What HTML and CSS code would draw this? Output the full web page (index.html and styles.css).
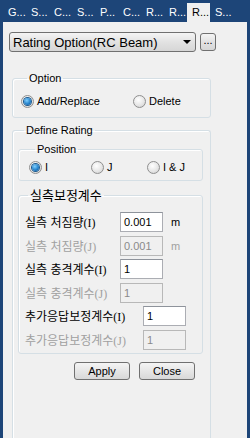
FILE: index.html
```html
<!DOCTYPE html>
<html lang="ko">

<head>
    <meta charset="utf-8">
    <title>Rating Option</title>
    <link rel="stylesheet" href="styles.css">
</head>

<body>

    <nav class="tabs">
        <span class="tab">G...</span>
        <span class="tab">S...</span>
        <span class="tab">C...</span>
        <span class="tab">S...</span>
        <span class="tab">P...</span>
        <span class="tab">C...</span>
        <span class="tab">R...</span>
        <span class="tab">R...</span>
        <span class="tab valgt">R...</span>
        <span class="tab">S...</span>
    </nav>

    <main class="panel">

        <div class="combo-row">
            <div class="combo">
                <span>Rating Option(RC Beam)</span>
                <span class="arrow"></span>
            </div>
            <button class="dots">...</button>
        </div>

        <fieldset class="group option">
            <legend>Option</legend>
            <div class="radios">
                <label class="radio on"><span class="dot"></span>Add/Replace</label>
                <label class="radio"><span class="dot"></span>Delete</label>
            </div>
        </fieldset>

        <fieldset class="group define">
            <legend>Define Rating</legend>

            <fieldset class="group position">
                <legend>Position</legend>
                <div class="radios">
                    <label class="radio on"><span class="dot"></span>I</label>
                    <label class="radio"><span class="dot"></span>J</label>
                    <label class="radio"><span class="dot"></span>I &amp; J</label>
                </div>
            </fieldset>

            <fieldset class="group factor">
                <legend>실측보정계수</legend>
                <div class="rows">
                    <div class="row">
                        <span class="lbl">실측 처짐량<i>(I)</i></span>
                        <span class="field">0.001</span>
                        <span class="unit">m</span>
                    </div>
                    <div class="row off">
                        <span class="lbl">실측 처짐량<i>(J)</i></span>
                        <span class="field">0.001</span>
                        <span class="unit">m</span>
                    </div>
                    <div class="row">
                        <span class="lbl">실측 충격계수<i>(I)</i></span>
                        <span class="field">1</span>
                    </div>
                    <div class="row off">
                        <span class="lbl">실측 충격계수<i>(J)</i></span>
                        <span class="field">1</span>
                    </div>
                    <div class="row wide">
                        <span class="lbl">추가응답보정계수<i>(I)</i></span>
                        <span class="field">1</span>
                    </div>
                    <div class="row wide off">
                        <span class="lbl">추가응답보정계수<i>(J)</i></span>
                        <span class="field">1</span>
                    </div>
                </div>
            </fieldset>

            <div class="knapper">
                <button>Apply</button>
                <button>Close</button>
            </div>
        </fieldset>

    </main>

</body>

</html>
```

FILE: styles.css
```css
* {
    box-sizing: border-box;
}

body {
    margin: 0;
    background-color: #1d4578;
    font-family: 'Liberation Sans', Arial, sans-serif;
    font-size: 11px;
    color: #000;
    height: 438px;
    overflow: hidden;
}

/* tabs */

.tabs {
    display: flex;
    height: 22px;
    padding: 3px 0 0 3px;
}

.tab {
    width: 23px;
    padding-left: 5px;
    color: white;
    line-height: 19px;
    white-space: nowrap;
}

.valgt {
    background-color: #f0f0f0;
    color: #000;
}

/* panel */

.panel {
    margin: 0 3px;
    height: 416px;
    overflow: hidden;
    background-color: #f0f0f0;
    padding: 10px 0 0 6px;
}

.combo-row {
    display: flex;
    align-items: center;
    gap: 4px;
}

.combo {
    width: 187px;
    height: 20px;
    border: 1px solid #707070;
    border-radius: 3px;
    background: linear-gradient(#f4f4f4, #e2e2e2 50%, #d6d6d6);
    display: flex;
    align-items: center;
    justify-content: space-between;
    padding: 0 4px 0 3px;
    font-size: 13px;
}

.arrow {
    width: 0;
    height: 0;
    border-left: 4px solid transparent;
    border-right: 4px solid transparent;
    border-top: 4px solid #000;
}

.dots {
    width: 16px;
    height: 18px;
    padding: 0 0 4px;
    border: 1px solid #707070;
    border-radius: 3px;
    background: linear-gradient(#f4f4f4, #e2e2e2 50%, #d6d6d6);
    font-family: 'Liberation Sans', Arial, sans-serif;
    font-size: 11px;
    line-height: 1;
}

/* groups */

.group {
    margin: 0;
    min-width: 0;
    border: 1px solid #d5dfe5;
    border-radius: 3px;
    box-shadow: inset 1px 1px 0 #fff;
}

.group legend {
    margin-left: 6px;
    padding: 0 2px;
    line-height: 13px;
    font-size: 11px;
}

.option {
    width: 199px;
    margin: 20px 0 0 3px;
    padding: 10px 0 9px 8px;
}

.define {
    width: 199px;
    height: 318px;
    margin: 6px 0 0 3px;
    padding: 6px 7px 0 5px;
    border-bottom: none;
    border-radius: 3px 3px 0 0;
}

.position {
    padding: 5px 0 6px 10px;
}

.factor {
    margin-top: 6px;
    padding: 9px 0 3px 6px;
}

.factor legend {
    font-family: 'Noto Sans CJK KR', sans-serif;
    font-size: 13px;
    line-height: 16px;
    margin-left: 3px;
}

/* radios */

.radios {
    display: flex;
    height: 13px;
}

.radio {
    display: flex;
    align-items: center;
    gap: 3px;
    line-height: 13px;
}

.option .radio:first-child {
    width: 112px;
}

.position .radio:nth-child(1) {
    width: 62px;
}

.position .radio:nth-child(2) {
    width: 56px;
}

.dot {
    width: 13px;
    height: 13px;
    border-radius: 50%;
    border: 1px solid #8f8f8f;
    background: radial-gradient(circle at 40% 35%, #fff, #e4e4e4 60%, #c8c8c8);
    display: flex;
    align-items: center;
    justify-content: center;
}

.on .dot::after {
    content: "";
    width: 7px;
    height: 7px;
    border-radius: 50%;
    background: radial-gradient(circle at 40% 35%, #7fd0ff, #1f7dc8 60%, #0d4f8c);
    box-shadow: 0 0 0 1px #1c5a8e;
}

/* rows */

.rows {
    display: flex;
    flex-direction: column;
    gap: 3.5px;
}

.row {
    display: flex;
    align-items: center;
    height: 20px;
    font-family: 'Noto Sans CJK KR', sans-serif;
    font-size: 12px;
}

.lbl {
    width: 95px;
    white-space: nowrap;
}

.wide .lbl {
    width: 118px;
}

.lbl i {
    font-style: normal;
    font-family: 'Liberation Serif', serif;
    font-size: 12px;
}

.field {
    width: 43px;
    height: 20px;
    border: 1px solid #abadb3;
    border-top-color: #8e939b;
    background-color: white;
    padding: 0 0 0 3px;
    font-family: 'Liberation Sans', Arial, sans-serif;
    font-size: 11px;
    line-height: 18px;
}

.unit {
    margin-left: 8px;
    font-family: 'Liberation Sans', Arial, sans-serif;
    font-size: 11px;
}

.off {
    color: #a0a0a0;
}

.off .field {
    background-color: #f0f0f0;
    border-color: #b8b8b8;
    color: #8a8a8a;
}

/* buttons */

.knapper {
    display: flex;
    justify-content: flex-end;
    gap: 9px;
    margin: 8px 8px 0 0;
}

.knapper button {
    width: 56px;
    height: 18px;
    padding: 0;
    border: 1px solid #707070;
    border-radius: 3px;
    background: linear-gradient(#f4f4f4, #e6e6e6 50%, #d8d8d8);
    font-family: 'Liberation Sans', Arial, sans-serif;
    font-size: 11px;
}
```
